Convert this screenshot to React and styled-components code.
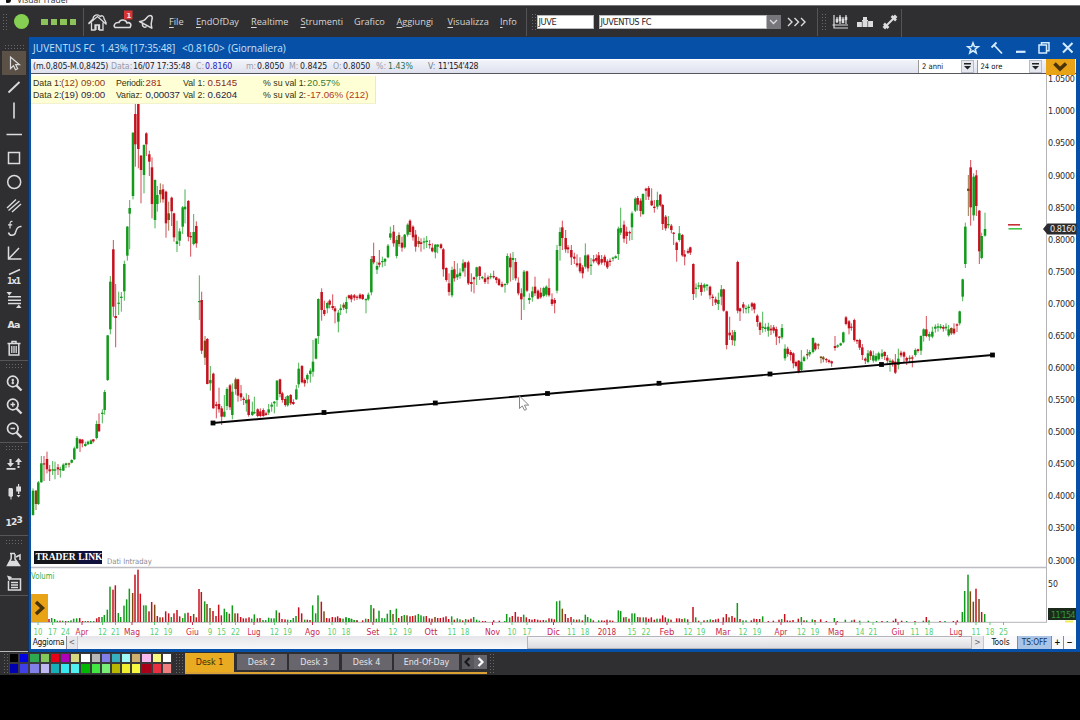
import React from 'react';
import styled, { createGlobalStyle } from 'styled-components';

const Global = createGlobalStyle`
  * { box-sizing: border-box; }
  body { margin: 0; background: #000; overflow: hidden; }
`;
const ui = `'Open Sans', 'Noto Sans', sans-serif`;
const tahoma = `'DejaVu Sans Condensed', 'DejaVu Sans', sans-serif`;

const Page = styled.div`
  width: 1080px; height: 720px; display: grid; background: #000;
  grid-template-rows: 5px 32px 615px 23px 45px;
  font-family: ${ui}; white-space: nowrap; overflow: hidden;
`;
const Caption = styled.div`
  background: #fff; overflow: hidden; display: flex; align-items: flex-end; padding: 0 0 2px 6px; gap: 1px;
  font-size: 8.5px; line-height: 7px; color: #333;
  svg { flex: none; align-self: flex-start; }
`;
const TopBar = styled.div`
  background: #2f2f31; border-top: 1px solid #77777a; display: flex; align-items: center; color: #d8d8d8;
  svg { display: block; flex: none; }
`;
const Grip = styled.div`
  flex: none; width: ${(p) => p.$w}px; height: ${(p) => p.$h}px; margin: ${(p) => p.$m || '0'};
  background-image: radial-gradient(circle, #66666b 0.6px, transparent 0.9px);
  background-size: 3px 3px;
`;
const Rule = styled.i`
  flex: none; width: 1px; height: 28px; background: #545458; margin: ${(p) => p.$m || '0'};
`;
const Led = styled.i`
  width: 15px; height: 15px; border-radius: 50%; background: #85d052; margin-left: 6px;
`;
const Signal = styled.div`
  display: flex; gap: 3px; margin: 0 0 0 12px; width: 43px;
  i { width: 6.5px; height: 6px; background: #8cc45a; }
`;
const IconSlot = styled.div`
  flex: none; width: ${(p) => p.$w}px; display: flex;
`;
const MenuItem = styled.span`
  flex: none; width: ${(p) => p.$w}px; font-size: 9.2px; color: #d6d6d6; line-height: 14px;
  u { text-underline-offset: 1.5px; text-decoration-thickness: 1px; }
`;
const Field = styled.div`
  flex: none; width: ${(p) => p.$w}px; height: 14px; background: #fff; color: #26262c; border: 1px solid #b9b9bd;
  font: 9.2px/12px ${tahoma}; letter-spacing: -0.4px; padding-left: 1px; margin: ${(p) => p.$m || '0'};
`;
const Drop = styled.div`
  width: 14px; height: 14px; background: #77777b; display: grid; place-items: center; flex: none;
`;

const Main = styled.div`display: grid; grid-template-columns: 28px 1fr;`;
const Tools = styled.div`
  background: #2f2f31; display: flex; flex-direction: column; align-items: stretch; padding-top: 7px;
  border-bottom: 1px solid #b9b9bd;
  svg { display: block; }
`;
const Tool = styled.div`
  flex: none; height: ${(p) => p.$h || 23.75}px; width: 24px; margin-left: 1.5px; display: grid; place-items: center;
  background: ${(p) => (p.$on ? '#5c5146' : 'none')};
`;
const HLine = styled.i`flex: none; height: 1px; background: #56565a;`;

const Win = styled.div`
  background: #0750a8; display: grid; grid-template-rows: 21.5px 15.5px 562px 13px; padding: 0 4px 3px 2px;
  border-left: 1px solid #12315e;
`;
const WinTitle = styled.div`
  display: flex; align-items: center; color: #c6e2fb; font-size: 10px; padding-left: 2px;
`;
const TitlePart = styled.b`
  flex: none; font-weight: 400; width: ${(p) => p.$w}px; letter-spacing: ${(p) => p.$ls || 0}px;
`;
const WinButtons = styled.div`
  margin: 0 -3.500px 0 auto; display: flex; align-items: center;
  svg { display: block; width: 24px; height: 16px; flex: none; }
`;
const Quote = styled.div`
  background: linear-gradient(#f2f4fa, #dfe2ee); border-bottom: 1px solid #55565c; border-top: 1px solid #fff;
  display: flex; align-items: center; font: 8.7px/13px ${tahoma}; padding-left: 2px; color: #222230;
`;
const Cell = styled.span`
  flex: none; width: ${(p) => p.$w}px; color: ${(p) => p.$c || '#20202c'}; letter-spacing: ${(p) => p.$ls || 0}px;
`;
const Range = styled.div`
  flex: none; width: ${(p) => p.$w}px; height: 13px; background: #fff; border-left: 1px solid #999; display: flex;
  align-items: center; padding-left: 3px; font: 7.6px ${tahoma}; color: #111; justify-content: space-between;
  margin-right: 2.500px;
`;
const Spin = styled.i`
  width: 13px; height: 13px; background: #e6e8f0; border: 1px solid #b8bac4; display: grid; place-items: center;
`;
const ChartArea = styled.div`
  position: relative; z-index: 1; background: #fff;
  > svg { display: block; overflow: visible; }
`;
const Readout = styled.div`
  position: absolute; left: 0; top: 2px; width: 345px; height: 28px; background: #ffffd6; padding: 1px 0 0 2px;
  font: 8.8px/12.5px 'Liberation Sans', sans-serif; color: #33330f;
  border-right: 1px solid #ecebc0; border-bottom: 1px solid #f3f2cf;
`;
const ReadRow = styled.div`display: flex; height: 12.2px;`;
const Label = styled.span`flex: none; width: ${(p) => p.$w}px; letter-spacing: ${(p) => p.$ls || 0}px;`;
const Value = styled.span`
  flex: none; width: ${(p) => p.$w}px; font-size: 9.7px; color: ${(p) => p.$c}; letter-spacing: ${(p) => p.$ls || 0}px;
`;
const Orange = styled.div`
  position: absolute; background: #e8a317; display: grid; place-items: center;
  left: ${(p) => p.$x}px; top: ${(p) => p.$y}px; width: ${(p) => p.$w}px; height: ${(p) => p.$h}px;
`;
const Brand = styled.div`
  position: absolute; left: 3px; top: 477px; width: 68px; height: 12.5px; background: #15151c; color: #fff;
  font: 700 9.5px/13px 'Liberation Serif', serif; padding-left: 1.5px; overflow: hidden;
  display: flex; gap: 1.5px; b { background: #10103c; padding: 0 1px; }
`;
const Foot = styled.div`
  position: absolute; left: 76px; top: 481.5px; font: 7.6px/12px ${tahoma}; color: #8b8b90;
`;
const Scroll = styled.div`
  background: #f0f0f2; display: flex; align-items: stretch; font: 8.3px/12.5px ${tahoma}; color: #111;
`;
const Btn = styled.div`
  flex: none; width: ${(p) => p.$w}px; background: ${(p) => p.$bg || '#fafafc'}; text-align: center;
  border-right: 1px solid ${(p) => p.$line || '#8a8a90'}; letter-spacing: ${(p) => p.$ls || 0}px; color: ${(p) => p.$c || '#111'};
  font-weight: ${(p) => (p.$bold ? 700 : 400)}; overflow: hidden;
`;
const Track = styled.div`flex: none; width: 449px; background: linear-gradient(#e6e6ea, #f8f8fa);`;
const Thumb = styled.div`flex: 1; border: 1px solid #b4b4ba; background: linear-gradient(#f6f6f8, #dcdce0);`;

const Bottom = styled.div`background: #2f2f31; display: flex; padding-top: 1px;`;
const Palette = styled.div`
  display: grid; grid-template-columns: repeat(16, 10.2px); grid-auto-rows: 10.3px; width: 164px; height: 21px;
`;
const Swatch = styled.i`border: 0.8px solid #3a3a3e; background: ${(p) => p.$c};`;
const Tabs = styled.div`
  display: flex; gap: 2.5px; height: 21px; width: 302px; border-bottom: 2px solid #dba233; margin-left: 1px;
`;
const Tab = styled.div`
  flex: none; width: ${(p) => p.$w}px; height: ${(p) => (p.$on ? 19 : 16)}px; margin-top: ${(p) => (p.$on ? 0 : 1)}px;
  background: ${(p) => (p.$on ? '#e8ab22' : '#68656c')}; color: ${(p) => (p.$on ? '#3b2a08' : '#e6e6ea')};
  font: 8.9px/${(p) => (p.$on ? 19 : 17)}px ${tahoma}; text-align: center;
`;
const Arrows = styled.div`
  width: 26px; height: 14px; margin-top: 2px; display: grid; grid-template-columns: 1fr 1fr; place-items: center;
  background: linear-gradient(90deg, #57575c 12px, #66666c 12px);
`;

const GREEN = '#129a1a';
const RED = '#c5101e';

/* Each candle: x high top bottom low colour, in thirds of a pixel from the series origin. */
const SERIES = [
  { ox: 30, oy: 100, d: `9 1165 1172 1245 1247 g|18 1170 1172 1212 1230 m|25 1143 1147 1212 1215 g|34 1068 1090 1147 1148 g|42 1068 1090 1092 1143 r|51 1055 1077 1108 1120 r|59 1095 1108 1114 1143 r|68 1083 1108 1112 1125 g|75 1085 1108 1112 1138 g|84 1092 1102 1108 1125 r|91 1100 1107 1110 1133 g|100 1090 1094 1112 1113 g|108 1088 1090 1095 1104 g|117 1088 1090 1093 1102 m|125 1078 1080 1088 1090 g|133 1040 1045 1078 1080 g|141 1008 1014 1045 1047 g|150 1016 1018 1030 1056 r|157 1017 1019 1030 1042 r|166 1025 1032 1038 1040 g|174 1022 1025 1033 1034 g|183 1018 1021 1032 1033 g|190 1017 1018 1024 1028 r|200 962 972 1014 1018 g|207 940 972 994 995 r|217 928 938 942 970 g|224 870 876 930 944 g|233 705 706 840 843 g|241 528 545 688 703 g|250 420 448 620 650 r|257 552 648 654 742 r|266 575 608 611 645 g|274 576 590 594 635 g|283 482 492 574 602 g|292 378 380 467 482 g|299 300 324 341 448 g|309 97 98 288 298 g|316 10 42 133 200 r|325 10 10 147 205 r|333 165 167 210 310 r|342 133 135 225 280 g|349 97 100 133 168 r|358 152 163 185 228 r|366 172 202 312 355 r|375 238 240 360 385 g|382 258 285 312 335 g|391 250 270 283 308 m|399 253 268 298 308 r|408 272 275 370 413 r|416 305 340 360 392 m|425 290 293 334 378 r|432 338 340 412 425 r|441 362 424 432 456 g|449 385 394 422 438 g|458 318 322 380 402 g|465 268 320 328 370 g|475 300 303 410 424 r|482 396 408 412 470 r|491 342 396 432 436 g|499 364 378 430 443 r|508 526 603 606 660 g|515 575 600 752 762 r|525 708 722 773 795 m|532 714 717 852 853 r|541 798 840 850 872 g|550 818 821 925 926 r|559 905 913 918 955 r|567 863 912 928 938 r|575 918 925 950 975 r|583 885 935 950 952 g|591 862 867 918 930 g|600 852 856 922 930 r|607 850 875 945 958 g|617 833 838 867 884 m|624 836 838 887 905 r|633 855 880 892 903 r|641 890 896 900 915 r|649 880 900 910 935 g|656 885 898 945 950 r|667 905 935 945 948 g|673 890 936 940 942 g|683 925 928 948 952 r|691 925 934 948 952 r|700 925 930 948 950 r|708 935 940 945 947 r|716 912 928 938 945 g|725 907 914 920 935 g|733 903 905 910 940 g|741 840 842 900 920 g|750 836 838 882 892 r|757 875 880 900 908 r|766 890 897 915 920 r|773 885 888 916 920 g|782 882 885 910 915 r|790 898 906 912 915 r|799 855 868 898 900 g|806 788 806 853 863 g|816 795 798 847 850 r|824 835 840 850 860 r|832 820 825 838 850 g|841 805 812 822 848 g|849 720 785 815 830 g|858 714 716 776 778 g` },
  { ox: 300, oy: 170, d: `55 385 387 498 522 g|65 355 366 420 452 r|73 392 420 432 438 r|82 395 399 415 430 g|89 388 392 404 415 r|98 373 408 414 420 r|105 408 415 424 460 r|115 420 428 455 487 g|122 403 415 420 435 g|131 398 404 413 420 m|139 380 396 417 430 g|147 374 376 384 388 r|154 372 376 388 397 r|163 372 376 383 392 r|171 376 380 383 390 r|180 370 374 385 388 r|188 372 374 387 390 r|198 385 387 390 430 g|205 368 374 388 392 g|214 258 267 367 376 g|221 218 258 277 283 r|231 275 288 299 312 g|238 240 278 284 292 r|247 260 273 276 292 g|255 264 267 275 288 g|264 222 227 262 265 g|271 170 190 203 210 g|281 165 185 220 230 r|290 198 210 258 265 g|297 187 195 222 230 m|306 200 218 233 245 r|314 192 194 232 236 g|323 160 164 194 200 g|330 148 152 186 195 r|339 166 170 202 212 r|347 180 194 230 245 r|356 200 213 222 232 m|363 205 217 222 245 r|372 203 214 218 238 g|380 198 212 216 234 g|389 210 222 224 236 r|397 220 233 244 247 r|406 222 224 247 265 g|413 222 224 230 250 g|423 220 223 234 238 r|430 234 238 298 320 r|439 292 294 330 335 r|447 310 340 366 377 r|456 290 300 376 382 g|463 273 298 325 335 r|472 280 313 322 330 g|480 295 308 318 326 g|489 268 280 304 308 g|495 275 277 293 320 r|505 272 277 340 345 r|514 310 336 342 365 r|522 320 322 328 370 r|530 290 292 320 345 g|539 288 290 318 330 r|547 318 321 324 328 g|555 308 325 336 342 r|564 316 322 328 342 r|572 310 318 322 328 g|581 302 318 322 326 r|589 320 322 330 340 r|597 324 328 345 348 r|606 335 342 350 352 r|615 340 342 344 368 g|622 250 258 340 345 g|631 250 263 292 335 r|639 246 264 270 330 g|647 264 276 325 332 r|655 322 338 370 376 r|664 355 370 388 450 r|672 300 305 380 420 g|681 302 304 362 366 r|688 370 384 390 402 g|697 350 364 382 395 g|705 320 350 370 378 r|714 358 362 386 388 r|722 353 368 382 386 r|731 350 354 378 382 g|739 346 350 374 380 g|747 325 354 376 380 r|756 370 388 402 408 r|764 384 390 400 430 r|771 225 240 362 370 g|780 172 186 228 272 g|787 152 172 204 240 r|797 180 204 238 248 r|804 225 232 238 250 r|814 225 240 262 285 r|823 248 260 266 282 r|831 253 280 286 292 r|840 262 280 304 310 r|848 285 292 310 325 r|856 220 256 290 296 g|864 252 256 295 305 r|873 264 284 288 315 g|881 255 268 274 280 r|889 253 264 272 278 r|896 246 256 283 287 r|905 255 267 278 284 r|914 254 260 277 287 r|922 268 274 292 297 r|930 265 272 276 288 r|939 260 263 266 274 g|947 256 259 264 266 g|955 170 176 252 270 g|962 113 174 188 195 g|972 152 164 206 218 r|980 170 185 198 222 r|989 182 186 190 212 r|996 124 130 172 210 g|1006 82 86 122 126 g|1013 78 84 104 122 r` },
  { ox: 640, oy: 150, d: `2 145 152 183 200 r|9 130 132 192 195 g|18 113 116 122 150 r|26 108 114 140 150 r|35 115 152 166 168 r|43 150 170 174 188 r|52 125 150 170 178 g|61 132 134 166 170 r|68 162 165 222 240 r|77 195 200 235 242 r|85 198 222 226 235 g|94 222 227 240 250 r|101 246 248 251 285 r|110 275 278 300 335 r|118 228 250 270 275 g|127 252 255 316 320 r|134 300 313 320 346 r|144 296 303 308 312 r|151 290 292 308 315 r|160 340 342 432 450 r|168 400 413 417 443 g|176 397 406 410 418 g|184 398 405 426 437 r|193 400 404 413 425 g|201 402 404 408 422 g|210 407 410 436 448 r|218 433 440 444 468 r|227 440 448 458 465 r|235 428 450 462 480 g|244 405 418 440 466 g|251 416 418 482 485 r|260 482 484 585 598 r|269 500 548 556 570 r|277 540 556 570 586 r|284 540 546 572 588 g|293 332 336 482 490 r|300 473 475 484 513 r|310 456 463 473 490 r|318 466 474 477 490 g|326 463 470 474 490 g|336 456 460 470 482 r|343 458 461 478 490 r|352 493 497 516 530 r|360 515 518 540 555 r|368 485 530 534 548 g|376 520 532 537 545 g|385 518 530 542 560 g|393 525 536 541 555 r|401 525 532 542 550 r|409 530 537 560 585 r|418 558 560 563 580 r|426 522 534 562 568 g|435 583 596 625 632 g|443 590 596 612 620 r|452 600 606 615 632 r|460 607 610 640 655 r|468 632 636 648 652 r|476 630 632 663 670 r|484 600 635 660 664 g|492 617 622 633 635 g|502 598 612 616 628 m|509 600 606 613 620 g|519 562 564 606 610 g|526 577 580 598 602 r|535 580 583 586 598 m|543 618 620 624 640 m|550 618 622 628 637 m|559 624 627 630 638 r|567 628 631 636 640 r|575 632 634 640 650 r|585 558 588 594 602 r|593 583 586 590 594 g|602 578 580 586 588 g|610 545 547 577 580 g|618 498 502 522 526 r|627 510 514 535 553 r|634 520 530 533 542 r|643 506 510 570 575 r|651 568 570 574 582 r|659 566 570 593 600 r|667 582 592 615 630 r|676 622 626 632 642 r|684 600 610 636 640 g|692 600 604 618 630 r|700 602 616 632 638 g|708 610 618 632 636 g|716 605 610 628 632 g` },
  { ox: 880, oy: 60, d: `6 868 880 890 897 g|14 874 876 888 900 r|22 885 893 902 912 r|30 895 902 907 935 g|38 898 902 912 920 r|46 882 905 938 942 r|55 866 896 915 928 g|63 872 878 886 892 r|72 874 877 890 908 r|80 890 894 902 915 r|89 886 893 896 906 m|97 886 892 896 922 r|106 865 870 885 890 g|114 866 868 873 878 r|123 826 828 872 885 g|131 805 808 828 845 g|139 768 808 828 832 r|148 815 822 830 842 g|157 800 815 830 835 g|166 793 800 806 818 g|174 790 799 803 815 g|182 792 799 804 808 g|190 795 801 806 815 r|198 790 800 805 812 g|206 795 808 826 830 g|214 802 804 820 825 m|222 790 806 820 824 r|231 790 793 797 816 r|239 752 754 790 796 g|248 656 658 710 724 g|256 488 500 612 624 g|265 345 386 393 468 m|272 300 322 442 497 r|281 340 350 466 482 g|289 330 346 438 468 r|298 450 452 574 612 r|305 518 528 594 598 g|315 458 507 527 530 g` },
];

/* Volume bars: x, height, colour, in thirds of a pixel above the baseline. */
const VOLUMES = [
  { ox: 0, d: `147 9 r|155 12 g|164 9 g|172 4 g|180 4 r|188 4 g|197 3 r|205 3 g|213 5 g|221 10 g|230 11 g|239 12 r|248 3 r|256 3 g|264 3 r|272 3 g|281 3 g|290 11 r|297 15 r|306 15 g|313 21 g|322 37 g|330 106 g|339 97 r|346 110 r|355 27 g|362 15 g|372 49 g|380 68 g|388 100 g|398 87 m|405 142 r|414 157 r|421 85 r|431 50 g|438 50 g|447 32 r|455 60 r|464 52 m|472 18 r|480 14 m|488 14 r|497 32 r|506 26 r|514 15 g|522 26 r|531 36 r|539 17 r|548 12 g|555 26 g|564 28 r|572 18 r|581 24 m|589 14 r|597 99 r|604 90 r|614 62 g|621 54 m|630 42 m|639 33 r|648 18 r|656 52 r|664 20 r|673 40 g|680 30 g|688 25 m|697 50 g|705 26 m|713 26 r|722 15 r|730 11 r|738 11 r|747 14 r|755 10 g|763 23 g|772 11 r|780 12 r|789 6 g|797 6 g|806 13 g|814 11 g|822 11 g|829 35 g|838 28 r|846 9 r|855 8 r|863 7 g|872 6 g|880 12 g|888 18 g|896 44 r|905 26 r|914 7 g|922 7 r|930 6 r|938 50 g|947 26 g|954 80 g|964 61 r|972 32 m|980 12 r|988 11 r|997 15 r|1006 14 r|1013 17 r|1021 10 r|1038 14 g|1046 11 g|1054 10 g|1063 6 g|1071 5 g` },
  { ox: 340, d: `0 12 r|9 10 g|18 14 g|27 12 g|35 9 g|43 6 g|51 5 r|68 5 r|77 10 g|85 9 r|93 51 g|101 41 m|109 10 g|117 34 g|126 12 g|134 11 g|142 25 g|151 36 g|159 24 m|169 40 g|176 12 r|185 18 m|193 21 g|201 20 m|210 17 r|218 18 r|226 20 m|235 24 g|243 20 g|251 17 g|259 18 r|268 11 r|276 10 r|285 15 m|293 12 r|301 12 r|310 14 r|318 17 r|326 9 r|335 17 g|343 7 r|352 11 g|360 8 g|368 5 r|377 9 g|385 7 r|393 10 r|401 15 g|410 7 g|418 4 g|428 3 r|436 3 r|461 5 r|478 4 r|494 3 g|500 24 g|509 14 g|517 18 r|526 30 r|534 16 r|543 15 r|551 22 g|559 14 r|568 9 r|576 7 r|584 9 r|593 7 r|601 5 r|610 6 r|618 5 g|627 11 r|635 10 r|643 8 r|650 62 g|659 64 g|667 40 m|676 24 r|684 12 r|693 15 r|701 8 g|710 7 r|718 8 g|727 5 r|736 22 g|743 15 g|752 10 g|760 5 r|776 5 g|785 5 r|793 4 r|801 7 r|810 5 r|818 4 r|835 35 g|842 33 g|851 14 r|858 15 g|867 10 r|876 26 g|884 26 g|893 15 m|900 14 r|910 14 g|918 14 r|926 10 r|934 14 r|943 7 r|951 10 g|960 10 r|968 20 r|976 14 r|985 10 g|993 7 r|1010 11 r|1018 11 r|1026 9 r|1034 11 g|1043 8 r|1059 45 r|1067 14 g|1076 4 r|1092 5 r|1102 6 g|1111 8 g|1119 6 r|1127 8 r|1135 10 r` },
  { ox: 720, d: `10 14 r|19 24 r|27 14 m|36 18 r|44 13 r|52 57 g|60 9 r|69 5 g|78 5 g|94 5 r|102 10 r|110 9 r|119 9 r|128 17 g|145 3 r|160 4 r|177 7 r|185 9 g|194 24 r|202 5 r|210 4 r|219 6 r|235 10 r|244 15 g|252 5 r|260 5 g|277 8 g|285 6 r|302 8 r|319 3 r|343 12 g|352 3 r|376 7 g|395 5 g|403 7 r|419 4 g|445 4 g|470 3 g|486 3 r|502 3 g|520 4 r|527 10 r|545 4 r|560 3 g|585 3 r|610 4 g|619 15 r|627 5 g|660 3 r|675 3 g|700 3 r|712 5 r|727 30 g|734 93 g|744 142 g|751 92 m|760 61 m|768 100 r|777 69 m|785 30 r|794 24 g` },
];

const MONTHS = `10 38,17 52.5,24 65.5,Apr 82,12 102.5,21 115.5,Mag 132,12 154.5,19 168,Giu 192.5,9 210,15 221.5,22 235.5,Lug 254,12 274.5,19 287.5,Ago 312.5,10 332,18 346,Set 373,12 393,19 407.5,Ott 431,11 452,18 465,Nov 492.5,10 512,17 527,Dic 553.5,11 571.5,18 585,2018 607,15 632,22 646,Feb 667,12 688,19 701,Mar 723,12 743,19 757,Apr 781,12 801.5,19 815,Mag 836,14 860,21 873,Giu 898,11 915,18 929,Lug 956,11 976,18 990,25 1003.5`
  .split(',').map((s) => s.split(' '));
const LABEL_WIDTH = { Mag: 16, Nov: 15, Ago: 15, Feb: 15, Mar: 15, 2018: 18.5, 9: 4.5 };

const tone = (c) => (c === 'g' ? GREEN : c === 'r' ? RED : '#7a4a10');
const HANDLES = [[213, 423], [324, 412.5], [435.3, 403], [547.5, 393.5], [659, 383.3], [770, 374], [881.5, 364.5], [992.5, 355]];

function Chart() {
  return (
    <svg width="1045" height="562" viewBox="31 74 1045 562" fontFamily={tahoma} fontSize="9">
      <path d="M1046.5 75V622M31 622.3H1047" stroke="#b5b5ba" fill="none" />
      <path d="M31 567.5H1046" stroke="#bdbdc2" strokeWidth="1.6" />
      {SERIES.map((s) => s.d.split('|').map((row) => {
        const v = row.split(' ');
        const [x, hi, top, bot, lo] = v.slice(0, 5).map((n) => Number(n) / 3);
        const c = tone(v[5]);
        return (
          <g key={s.ox + row} fill={c}>
            <rect x={s.ox + x - 0.5} y={s.oy + hi} width="1" height={lo - hi} opacity="0.75" />
            <rect x={s.ox + x - 1.25} y={s.oy + top} width="2.5" height={Math.max(1.2, bot - top)} />
          </g>
        );
      }))}
      {VOLUMES.map((s) => s.d.split('|').map((row) => {
        const [x, h, c] = row.split(' ');
        return <rect key={s.ox + row} x={s.ox + x / 3 - 0.75} y={622 - h / 3} width="1.5" height={h / 3} fill={tone(c)} />;
      }))}
      <path d="M213 423L992.5 355" stroke="#050505" strokeWidth="1.9" />
      {HANDLES.map(([x, y]) => <rect key={x} x={x - 2.4} y={y - 2.4} width="4.8" height="4.8" fill="#050505" />)}
      <path d="M519.5 396v12.5l2.8-2.6 2.2 4.4 2-1-2-4.2h4.2z" fill="#fff" stroke="#77777c" strokeWidth="0.9" />
      <path d="M1008 224.8h12" stroke="#c83038" strokeWidth="1.6" />
      <path d="M1008.5 228.8h13.5" stroke="#45c44c" strokeWidth="1.6" />
      {Array.from({ length: 16 }, (_, i) => (
        <text key={i} x="1048" y={82.3 + i * 32.08} fill="#2a2a2e" textLength="27" lengthAdjust="spacing">{(1.05 - i * 0.05).toFixed(4)}</text>
      ))}
      <path d="M1043 229l4.5-5.5h29v11h-29z" fill="#2b2b2e" />
      <text x="1050" y="232.3" fill="#eee" textLength="26">0.8160</text>
      <text x="1048" y="586.8" fill="#2a2a2e" fontSize="8.7">50</text>
      <rect x="1048" y="608" width="28" height="12" fill="#1c2a1c" />
      <text x="1051" y="617.5" fill="#2f9a35" textLength="24.5">11'154</text>
      <path d="M1065 621.5h8" stroke="#f1ec5a" strokeWidth="2" />
      <text x="31" y="578.7" fill="#35ad45" fontSize="8" textLength="23.5" lengthAdjust="spacingAndGlyphs">Volumi</text>
      {MONTHS.map(([t, x]) => {
        const day = t.length < 3;
        const w = LABEL_WIDTH[t] || (day ? 8.8 : 12.8);
        return (
          <g key={x} fill={day ? '#58cf70' : '#c8284c'}>
            <rect x={x - 0.5} y="622" width="1" height="3" />
            <text x={x - w / 2} y="634.800" textLength={w} lengthAdjust="spacingAndGlyphs">{t}</text>
          </g>
        );
      })}
    </svg>
  );
}

function Glyph({ children, w = 18, h = 18, sw = 1.5 }) {
  return (
    <svg width={w} height={h} viewBox={`0 0 ${w} ${h}`} fill="none" stroke="#dcdcde" strokeWidth={sw}>{children}</svg>
  );
}
const glyphText = { fill: '#e2e2e4', stroke: 'none', fontFamily: "'DejaVu Sans', sans-serif", fontWeight: 700 };

const DRAW = [
  <path d="M5.5 3v11.5l3-2.8 2 4 2.2-1-2-4h3.8z" strokeWidth="1.2" />,
  <path d="M3.5 14.5L14.5 4" strokeWidth="1.8" />,
  <path d="M9 1.5v16" strokeWidth="1.6" />,
  <path d="M1.5 9.5h15.5" strokeWidth="1.5" />,
  <rect x="3.5" y="3.5" width="11" height="11" />,
  <circle cx="9.2" cy="9" r="6.5" />,
  <path d="M2 12L11 3.5M3.5 14.5L14.5 5M7 16L16 8" strokeWidth="1.4" />,
  <g><path d="M3.500 12.500c1 4 6 3.500 7 0 .8-3.500 2-6.500 6-6" /><path d="M7.500 1.500c-2-.5-2.500 1-2.500 2.500v4.500M3 4.800h4.200" strokeWidth="1.2" /></g>,
  <path d="M3.5 2.500v12.500h13M3.500 15L14 4" strokeWidth="1.5" />,
  <g><path d="M4 6.5L15 1.5" /><text x="2" y="16" fontSize="8" textLength="14" {...glyphText}>1x1</text></g>,
  <g><path d="M3 5.7h13M3 9.3h13M3 12.5h13" /><path d="M1.500 1h5.500l-2.700 3.500zM11 17h5.500l-2.700-3.500z" fill="#dcdcde" stroke="none" /></g>,
  <text x="2.5" y="13" fontSize="9.5" textLength="13" {...glyphText}>Aa</text>,
  <g><path d="M2.5 4.5h13M7 4V2.500h4V4M4.200 5v11h9.600V5" /><path d="M6.800 7v7M9 7v7M11.200 7v7" strokeWidth="1.3" /></g>,
];
const lens = (inner) => (
  <g><circle cx="7.800" cy="7.500" r="5.300" strokeWidth="1.7" /><path d="M11.500 11.500l5 5" strokeWidth="2.4" />{inner}</g>
);
const ZOOMS = [
  lens(<path d="M7.800 4.800v5.400M6.600 6h2.400M6.600 9h2.400" strokeWidth="1.3" />),
  lens(<path d="M5.500 7.500h4.600M7.800 5.200v4.600" strokeWidth="1.4" />),
  lens(<path d="M5.500 7.500h4.600" strokeWidth="1.5" />),
];
const STYLES = [
  <g fill="#dcdcde" stroke="none"><path d="M4.500 4h2v4h2.500l-3.500 4-3.500-4h2.500zM1.500 13h9v1.800h-9z" /><path d="M13.500 3l3.500 4h-2.500v3h-2V7H10zM12.500 11h2v2h-2z" /></g>,
  <g fill="#dcdcde" stroke="none"><path d="M4 5h3l1 1v7l-1.500 1v2.500h-1V14L3.500 13V6zM13 1h1.200v2.500h1.800v5h-1.700v2.500H13V8.500h-1.800v-5H13zM11.500 12h4l-2 2.500z" /></g>,
  <g fontSize="9" {...glyphText}><text x="0.500" y="14">1</text><text x="6" y="12.500">2</text><text x="11.500" y="11">3</text></g>,
];
const LABS = [
  <g><path d="M5 2.500h5M6.200 3v4.500L2.500 14.500h12L10 8V3" /><path d="M5 10.500h6.500l2 3.500H3.500z" fill="#dcdcde" /><path d="M11 6l4-2v5" /></g>,
  <g><path d="M5 5h10.500v11H3.500V7" /><path d="M6 8.500h7M6 11h7M6 13.500h7" strokeWidth="1.3" /><path d="M2 1.500l5 1.500-3 4z" fill="#dcdcde" stroke="none" /></g>,
];

const MENU = [['F', 'ile', 27], ['E', 'ndOfDay', 55], ['R', 'ealtime', 49.5], ['S', 'trumenti', 53.5], ['', 'Grafico', 42.5], ['A', 'ggiungi', 51], ['V', 'isualizza', 52.5], ['I', 'nfo', 25.5]];
const COLORS = '#000 #0000e0 #2fa84f #84c85a #e80018 #b000b8 #d8d880 #fff #b8b8b8 #8080e8 #38b0c0 #a0f8f8 #d0b070 #f8b8f0 #f8f880 #fff #0000b0 #4040e8 #8080e8 #c0b8f0 #18b0b8 #38e8f0 #50f0f0 #00b800 #40e840 #78f078 #b8b800 #f0f030 #f8f840 #a80018 #e83040 #f08080'.split(' ');

function Toolbar() {
  return (
    <TopBar>
      <Grip $w={6} $h={18} $m="0 0 0 2px" />
      <Led />
      <Signal><i /><i /><i /><i /></Signal>
      <Rule $m="0 3px 0 -1px" />
      <IconSlot $w={25}>
        <Glyph w={21} h={20} sw={1.3}>
          <path d="M1.500 11.500L6 7c0-4 5-5.500 7-2.500 2-1.500 4-.5 4 2l2.500 5M1.500 12L10.500 4.500l9 8M4.500 10.500V18h3.500v-5h4.500v5h3.500v-7.500M9 13v5M11.500 13v5" />
        </Glyph>
      </IconSlot>
      <IconSlot $w={26}>
        <Glyph w={22} h={23}>
          <path d="M3 17.500h15c2.500-4-1-5.500-3-4.500-1-4-7-4-8-.5-4-.5-6 3-4 5z" />
          <rect x="12" y="0.500" width="8.500" height="9" fill="#d93434" stroke="none" />
          <text x="14.500" y="8" fontSize="7" {...glyphText}>1</text>
        </Glyph>
      </IconSlot>
      <IconSlot $w={31}>
        <Glyph w={18} h={18}><path d="M1.500 8.500c3 0 5-1 7-3.500 1.500-2 3-2.800 4.500-2.300 1.500.8 1.500 2.500.8 4.500-1 3-1 5 0 8zM4.500 10.800c-.5 2.500 2 4.500 4 2.700" strokeLinejoin="round" /></Glyph>
      </IconSlot>
      {MENU.map(([a, b, w]) => <MenuItem key={b} $w={w}><u>{a}</u>{b}</MenuItem>)}
      <Rule $m="0 4px 0 0" />
      <Grip $w={6} $h={18} />
      <Field $w={57} $m="0 5px 0 0">JUVE</Field>
      <Field $w={168}>JUVENTUS FC</Field>
      <Drop><svg width="9" height="6" fill="none" stroke="#ddd" strokeWidth="1.3"><path d="M1 1l3.500 3.500L8 1" /></svg></Drop>
      <IconSlot $w={35}>
        <Glyph w={30} h={12} sw={1.4}><path d="M7 2l4 4-4 4M13.500 2l4 4-4 4M20 2l4 4-4 4" /></Glyph>
      </IconSlot>
      <Rule $m="0 3px 0 1px" />
      <Grip $w={6} $h={18} $m="0 5px 0 0" />
      <IconSlot $w={25}>
        <Glyph w={17} h={16} sw={1.2}>
          <path d="M2 1v13h14M.5 11H16M5 3v6M8 1v9M11 3v6M14 1v9" /><path d="M4 5h2v3H4zM7 3h2v4H7zM10 5h2v4h-2zM13 3h2v3h-2z" fill="#dcdcde" strokeWidth=".5" />
        </Glyph>
      </IconSlot>
      <IconSlot $w={25}>
        <svg width="16" height="12" fill="#dcdcde"><path d="M0 6h5V4h1V1h4v3h1v1h5v6H0z" /><path d="M5.300 5v6M10.700 5v6" stroke="#555" strokeWidth=".8" /></svg>
      </IconSlot>
      <IconSlot $w={19}>
        <Glyph w={16} h={16}><path d="M4.500 11.500l7-7" strokeWidth="2" /><path d="M2 9.500l4.500 4.500M9.500 2l4.500 4.500M1.500 12l2.500 2.500M12 1.500L14.500 4" strokeWidth="2.6" /></Glyph>
      </IconSlot>
      <Rule $m="3px 0 0 0" />
    </TopBar>
  );
}

function Stepper() {
  return <Spin><svg width="7" height="8"><path d="M0 1h7v1.500H0zM0 4h7L3.500 7.500z" fill="#222" /></svg></Spin>;
}

export default function App() {
  return (
    <Page>
      <Global />
      <Caption><svg width="10" height="5"><circle cx="2" cy="0" r="3" fill="#111" /></svg>Visual Trader</Caption>
      <Toolbar />
      <Main>
        <Tools>
          <Grip $w={20} $h={6} $m="0 0 1px 4px" />
          {DRAW.map((d, i) => <Tool key={i} $on={i === 0}><Glyph>{d}</Glyph></Tool>)}
          <HLine /><Grip $w={18} $h={6} $m="2.5px 0 1.5px 5px" />
          {ZOOMS.map((d, i) => <Tool key={i} $h={23.6}><Glyph>{d}</Glyph></Tool>)}
          <HLine /><Grip $w={18} $h={5} $m="2px 0 0 5px" />
          {STYLES.map((d, i) => <Tool key={i} $h={28.6}><Glyph>{d}</Glyph></Tool>)}
          <HLine /><Grip $w={18} $h={6} $m="3px 0 3px 5px" />
          {LABS.map((d, i) => <Tool key={i} $h={23.4}><Glyph>{d}</Glyph></Tool>)}
          <HLine />
        </Tools>
        <Win>
          <WinTitle>
            <TitlePart $w={67} $ls={0.08}>JUVENTUS FC</TitlePart><TitlePart $w={30}>1.43%</TitlePart><TitlePart $w={52} $ls={-0.1}>[17:35:48]</TitlePart>
            <TitlePart $w={46}>&lt;0.8160&gt;</TitlePart><TitlePart $w={60}>(Giornaliera)</TitlePart>
            <WinButtons>
              <svg viewBox="0 0 24 16" fill="none" stroke="#d4ecff" strokeWidth="1.6"><path d="M13 3l1.400 3.600 3.800.2-3 2.400 1 3.700-3.200-2.100-3.200 2.100 1-3.700-3-2.400 3.800-.2z" /></svg>
              <svg viewBox="0 0 24 16" fill="none" stroke="#d4ecff" strokeWidth="1.8"><path d="M7.500 7.500l5-5M10 5l8 8.500" /></svg>
              <svg viewBox="0 0 24 16" stroke="#d4ecff" strokeWidth="2.2"><path d="M8 11.800h9.500" /></svg>
              <svg viewBox="0 0 24 16" fill="none" stroke="#d4ecff" strokeWidth="1.5"><path d="M7 5h7.500v8H7zM9.500 5V2.700H17v8h-2.500" /></svg>
              <svg viewBox="0 0 24 16" stroke="#d4ecff" strokeWidth="2"><path d="M7 3l9.500 9.500M16.500 3L7 12.500" /></svg>
            </WinButtons>
          </WinTitle>
          <Quote>
            <Cell $w={78} $ls={-0.15}>(m.0,805-M.0,8425)</Cell>
            <Cell $w={22} $c="#9a9aa8">Data:</Cell><Cell $w={63} $ls={-0.2}>16/07 17:35:48</Cell>
            <Cell $w={9} $c="#9a9aa8">C:</Cell><Cell $w={41} $c="#2a22c4">0.8160</Cell>
            <Cell $w={11} $c="#9a9aa8">m:</Cell><Cell $w={32}>0.8050</Cell>
            <Cell $w={11} $c="#9a9aa8">M:</Cell><Cell $w={33}>0.8425</Cell>
            <Cell $w={10} $c="#9a9aa8">O:</Cell><Cell $w={33}>0.8050</Cell>
            <Cell $w={12} $c="#9a9aa8">%:</Cell><Cell $w={40} $c="#2d7050">1.43%</Cell>
            <Cell $w={10} $c="#777788">V:</Cell><Cell $w={480} $ls={-0.4}>11'154'428</Cell>
            <Range $w={56}>2 anni<Stepper /></Range>
            <Range $w={65}>24 ore<Stepper /></Range>
          </Quote>
          <ChartArea>
            <Chart />
            <Readout>
              <ReadRow>
                <Label $w={28}>Data 1:</Label><Value $w={55} $c="#8a3a1c">(12) 09:00</Value>
                <Label $w={29.5} $ls={-0.15}>Periodi:</Label><Value $w={37.5} $c="#9a2c1c">281</Value>
                <Label $w={24.5}>Val 1:</Label><Value $w={55.5} $c="#8a2a20">0.5145</Value>
                <Label $w={44}>% su val 1:</Label><Value $w={60} $c="#3c7a2c">20.57%</Value>
              </ReadRow>
              <ReadRow>
                <Label $w={28}>Data 2:</Label><Value $w={55} $c="#2a2a50">(19) 09:00</Value>
                <Label $w={29.5} $ls={-0.1}>Variaz:</Label><Value $w={37.5} $c="#23234a" $ls={-0.1}>0,00037</Value>
                <Label $w={24.5}>Val 2:</Label><Value $w={55.5} $c="#23234a">0.6204</Value>
                <Label $w={44}>% su val 2:</Label><Value $w={64} $c="#b03a1c">-17.06% (212)</Value>
              </ReadRow>
            </Readout>
            <Brand>TRADER<b>LINK</b></Brand>
            <Foot>Dati Intraday</Foot>
            <Orange $x={1015} $y={-15} $w={28.5} $h={16}>
              <svg width="15" height="10" fill="none" stroke="#4a3308" strokeWidth="3.6"><path d="M1.500 1.500l5.500 5.500L13 1.500" /></svg>
            </Orange>
            <Orange $x={0} $y={520} $w={17} $h={28}>
              <svg width="12" height="16" fill="none" stroke="#4a3308" strokeWidth="3.4"><path d="M2 2l6.500 6L2 14" /></svg>
            </Orange>
          </ChartArea>
          <Scroll>
            <Btn $w={36} $ls={-0.25}>Aggiorna</Btn><Btn $w={11} $bg="#e8e8ec" $line="#c5c5ca" $c="#666">&lt;</Btn>
            <Track /><Thumb />
            <Btn $w={12} $bg="#e8e8ec" $line="#c5c5ca" $c="#666">&gt;</Btn>
            <Btn $w={34}>Tools</Btn><Btn $w={34} $bg="#a9c4e4" $ls={-0.15} $c="#16345e">TS:OFF</Btn>
            <Btn $w={12} $bold>+</Btn><Btn $w={12} $bold $line="#fff">−</Btn>
          </Scroll>
        </Win>
      </Main>
      <Bottom>
        <Grip $w={6} $h={20} $m="0 0 0 3px" />
        <Palette>{COLORS.map((c, i) => <Swatch key={i} $c={c} />)}</Palette>
        <Grip $w={9} $h={20} $m="0 0 0 2px" />
        <Tabs>
          <Tab $w={49} $on>Desk 1</Tab><Tab $w={50}>Desk 2</Tab><Tab $w={50}>Desk 3</Tab><Tab $w={50}>Desk 4</Tab><Tab $w={65}>End-Of-Day</Tab>
          <Arrows>
            <svg width="8" height="10" fill="none" stroke="#18181a" strokeWidth="2.2"><path d="M5.500 1l-4 4 4 4" /></svg>
            <svg width="8" height="10" fill="none" stroke="#fff" strokeWidth="2.2"><path d="M1.500 1l4 4-4 4" /></svg>
          </Arrows>
        </Tabs>
        <Grip $w={6} $h={20} $m="0 0 0 2px" />
      </Bottom>
    </Page>
  );
}
